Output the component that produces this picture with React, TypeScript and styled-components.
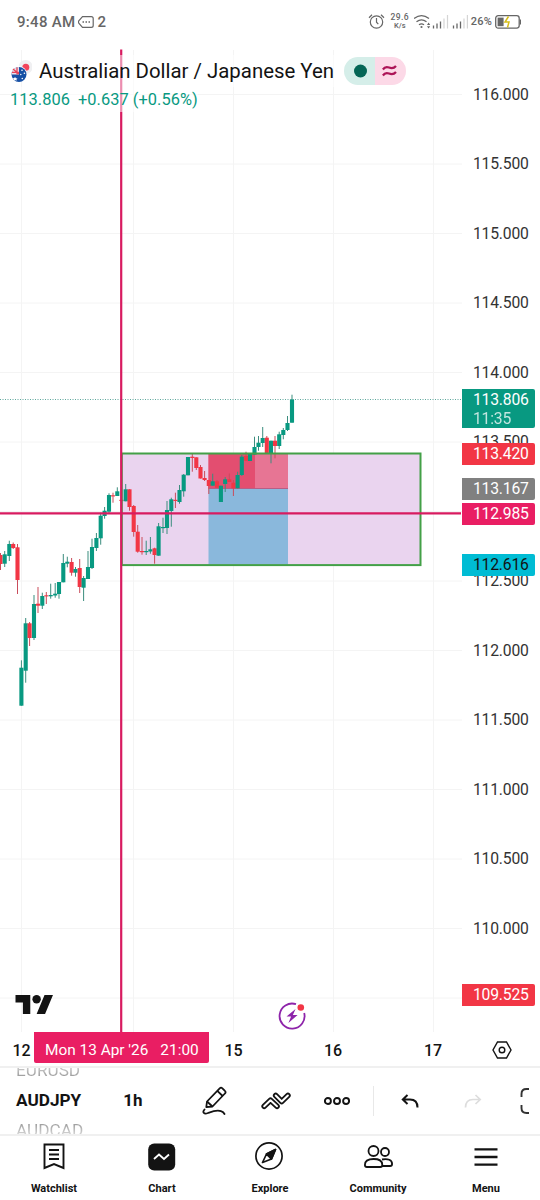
import React from 'react';
import styled, { createGlobalStyle } from 'styled-components';

const GlobalStyle = createGlobalStyle`
  * { box-sizing: border-box; }
  body { margin: 0; background: #fff; font-family: Roboto, "Liberation Sans", sans-serif; color: #131313; }
  svg { flex: none; }
`;

const GREEN = '#089981';
const RED = '#f23645';
const PINK = '#d81b60';

const Screen = styled.div`
  width: 540px; height: 1200px; display: flex; flex-direction: column; overflow: hidden; background: #fff;
`;
const StatusBar = styled.header`
  height: 48px; flex: none; display: flex; align-items: center; justify-content: space-between;
  padding: 0 18px 5px 17px; color: #666;
`;
const StatusGroup = styled.div`
  display: flex; align-items: center; gap: 3px;
`;
const Clock = styled.span`
  font-size: 15px; font-weight: 500; letter-spacing: 0.3px; white-space: nowrap;
`;
const AlarmIcon = styled.svg`margin-right: 2px;`;
const Speed = styled.span`
  display: flex; flex-direction: column; align-items: center; font-size: 8.5px; line-height: 8.5px; font-weight: 500;
  letter-spacing: 0.4px; width: 20px; margin-right: 1px;
  small { font-size: 7.5px; letter-spacing: 0; }
`;
const Battery = styled.span`font-size: 11px; font-weight: 500; letter-spacing: 0.2px;`;

const ChartArea = styled.main`
  position: relative; height: 984px; flex: none; display: flex;
`;
const Plot = styled.svg`display: block; flex: none;`;
const PriceAxis = styled.aside`
  position: relative; width: 78px; height: 984px; padding-top: 11.5px;
`;
const TickList = styled.div`display: flex; flex-direction: column;`;
const Tick = styled.div`
  height: 69.5px; flex: none; padding: 24px 0 0 11px; font-size: 15.7px; line-height: 22px; color: #333; letter-spacing: -0.2px;
`;
const PriceTag = styled.div<{ $top: number; $bg: string; $color?: string }>`
  position: absolute; left: 0; top: ${p => p.$top}px; width: 73px; min-height: 22px; padding: 0 0 0 11px;
  border-radius: 0 2px 2px 0; background: ${p => p.$bg}; color: ${p => p.$color ?? '#fff'};
  font-size: 15.7px; line-height: 22px; letter-spacing: -0.2px;
  small { display: block; font-size: 15.7px; line-height: 15px; height: 17px; opacity: .75; }
`;

const Legend = styled.section`
  position: absolute; left: 0; top: 7px; display: flex; flex-direction: column; padding-left: 10px;
`;
const LegendRow = styled.div`
  height: 32px; display: flex; align-items: center;
`;
const SymbolName = styled.h1`
  margin: 0 10px 0 7px; font-size: 20.4px; line-height: 32px; font-weight: 400; white-space: nowrap; background: rgba(255,255,255,.5);
`;
const Quote = styled.div`
  align-self: flex-start; display: flex; gap: 8px; height: 25px; line-height: 25px; font-size: 16.4px; color: ${GREEN};
  background: rgba(255,255,255,.5); white-space: nowrap; letter-spacing: 0.05px;
`;
const Pill = styled.div`
  display: flex; width: 62px; height: 28px; border-radius: 14px; overflow: hidden;
`;
const PillHalf = styled.span<{ $bg: string }>`
  flex: 1; display: flex; align-items: center; justify-content: center; background: ${p => p.$bg};
`;
const Brand = styled.svg`position: absolute; left: 15px; top: 947px;`;
const Flash = styled.svg`position: absolute; left: 277px; top: 953px;`;

const TimeAxis = styled.div`
  height: 36px; flex: none; display: flex; align-items: center; border-bottom: 2px solid #f0f0f0;
  font-size: 16px; font-weight: 500;
`;
const Day = styled.span<{ $w: number }>`width: ${p => p.$w}px; flex: none; text-align: center; padding-top: 2px;`;
const FirstDay = styled(Day)`text-align: left; padding-left: 12.5px;`;
const DateTag = styled.div`
  width: 175px; height: 31px; flex: none; align-self: flex-start; display: flex; align-items: center; gap: 12px;
  padding: 5px 0 0 11px; background: #e91e63; color: #fff; border-radius: 0 0 2px 2px;
  font-size: 15.4px; font-weight: 400; white-space: nowrap;
`;

const Toolbar = styled.div`
  height: 68px; flex: none; display: flex; align-items: center; border-bottom: 2px solid #f0f0f0; overflow: hidden;
`;
const SymbolWheel = styled.div`
  width: 101px; height: 66px; flex: none; padding: 0 0 2px 16px; display: flex; flex-direction: column; justify-content: center;
  overflow: hidden;
`;
const WheelItem = styled.span<{ $on?: boolean; $fade?: string }>`
  font-size: 17.2px; line-height: 30px; height: 30px; flex: none; align-self: flex-start;
  font-weight: ${p => (p.$on ? 700 : 400)};
  color: ${p => (p.$on ? '#131313' : 'transparent')};
  ${p => p.$fade && `background: linear-gradient(${p.$fade}, #888 15%, #e4e4e4 75%); -webkit-background-clip: text; background-clip: text;`}
`;
const ToolSlot = styled.div<{ $w: number; $ml?: number }>`
  width: ${p => p.$w}px; margin-left: ${p => p.$ml ?? 0}px; height: 66px; flex: none; display: flex; align-items: center;
  justify-content: center;
`;
const Interval = styled(ToolSlot)`padding-bottom: 2px; font-size: 17px; font-weight: 700;`;
const AxisSettings = styled.div`
  width: 87px; flex: none; display: flex; justify-content: center; padding-top: 2px;
`;
const Divider = styled.i`width: 1px; height: 30px; margin-left: 6px; background: #e8e8e8; flex: none;`;

const Nav = styled.nav`height: 64px; flex: none; display: flex;`;
const NavItem = styled.a`
  width: 108px; display: flex; flex-direction: column; align-items: center; padding-top: 6px;
  font-size: 11px; line-height: 16px; font-weight: 700; gap: 9.5px;
`;

type Candle = [number, number, number, number, number, 0 | 1];
// x, body top, body bottom, wick top, wick bottom, rising
const candles: Candle[] = [
  [0.5, 555, 564, 553, 570, 0], [4.7, 554.3, 563.7, 551, 567, 1], [9.3, 544, 556, 540.7, 561, 1],
  [13.2, 544, 548, 542.5, 549, 0], [17.5, 547.3, 580, 544, 594, 0], [21.4, 667.7, 705.7, 660.3, 705.7, 1],
  [25.7, 623.3, 670.7, 618, 682.7, 1], [29.6, 623.3, 638, 622, 646, 0], [34, 604, 638, 595, 640, 1],
  [38, 603.7, 605.7, 587, 613, 0], [42.3, 596, 605.7, 592.7, 609, 1], [46.3, 595.3, 596.4, 592, 604, 0],
  [50.7, 595, 596.3, 583.7, 598.7, 1], [55.2, 593.7, 595.5, 583, 597.7, 1], [59, 582, 594, 582, 598.7, 1],
  [63.3, 563, 582.3, 554, 582.3, 1], [67.3, 561.7, 563.7, 556.7, 567.3, 1], [71.6, 562, 572.7, 558, 575.7, 0],
  [75.5, 569, 572.7, 567, 576.7, 1], [79.7, 568, 587, 559, 593, 0], [83.6, 578, 587.7, 576, 601, 1],
  [88, 567, 579, 551, 579, 1], [92, 547, 568, 538.7, 569, 1], [96.4, 538, 548, 533, 551, 1],
  [100.7, 515.7, 538.3, 512.7, 544.7, 1], [104.6, 510.7, 516, 507, 518.7, 1], [109, 495, 511.7, 493.3, 513, 1],
  [113, 495.3, 496.4, 492.7, 502.7, 0], [117.3, 491.3, 496, 487.3, 496, 1], [121.4, 499.8, 501, 487, 501, 0],
  [125.7, 489.3, 501.3, 484, 501.3, 1], [129.5, 489.3, 507, 489.3, 510.7, 0], [133.7, 506, 532, 505, 536.7, 0],
  [137.7, 531.7, 551.7, 525, 552.7, 0], [142, 551, 552.2, 537, 554.7, 0], [146.2, 551, 552.2, 540.7, 555, 1],
  [150.4, 549.3, 551.5, 537, 553.7, 1], [154.6, 548.3, 555, 547.7, 563.7, 0], [158.6, 526.3, 555.7, 523, 555.7, 1],
  [163, 527, 528.2, 517.7, 533, 1], [167, 510, 528, 501, 534, 1], [171.3, 499.3, 511, 497.7, 526.7, 1],
  [175.4, 499.8, 501, 492.7, 508, 0], [179.5, 490, 502, 485, 503.7, 1], [183.7, 474.7, 491.3, 474, 496.7, 1],
  [188, 457, 475.3, 457, 475.3, 1], [192.3, 456.7, 458, 453.3, 471.7, 0], [196.3, 457.3, 468, 457.3, 470, 0],
  [200.5, 467, 478.5, 465, 478.5, 0], [204.6, 478, 480, 471, 481, 0], [208.8, 480, 486, 480, 494, 0],
  [212.7, 481.3, 485.7, 473.7, 485.7, 1], [217, 481.3, 487.7, 480, 487.7, 0], [220.9, 485.7, 502, 485.7, 502, 1],
  [225.2, 479.3, 484, 477, 492, 1], [229.3, 479.3, 482, 473.5, 482, 0], [233.4, 482.7, 488.3, 480, 496, 0],
  [237.6, 475, 488.3, 471.7, 488.3, 1], [241.8, 456.7, 475, 455, 476, 1], [246, 456, 460.7, 451.7, 461, 0],
  [250, 454, 461, 454, 461, 1], [254.5, 447, 454.7, 436.7, 454.7, 1], [258.5, 442.7, 447, 436, 450.7, 1],
  [262.7, 438, 443, 427, 447, 1], [266.8, 437.7, 453.7, 436, 453.7, 0], [271, 440.7, 453.7, 440.7, 463.3, 1],
  [275, 440.7, 446, 436, 458.3, 0], [279.2, 434.3, 446, 431.7, 449, 1], [283.3, 430, 435, 428, 439.3, 1],
  [287.5, 423, 430, 416, 431, 1], [292, 399.3, 422.7, 394.7, 422.7, 1],
];

const prices = ['116.000', '115.500', '115.000', '114.500', '114.000', '113.500', '113.000', '112.500', '112.000', '111.500', '111.000', '110.500', '110.000'];

const ChartPlot = () => (
  <Plot width="462" height="984" viewBox="0 48 462 984">
    {prices.concat('109.500').map((p, i) => <path key={p} d={`M0 ${94.5 + i * 69.5}H462`} stroke="#f4f4f4" />)}
    {[21.5, 133.5, 233.5, 333.5, 433.5].map(x => <path key={x} d={`M${x} 50V1032`} stroke="#f4f4f4" />)}
    <rect x="121.5" y="453.7" width="299" height="111.6" fill="#ead4ef" />
    <rect x="208.5" y="454" width="79.5" height="34.5" fill="#e77594" />
    <rect x="208.5" y="454" width="46.5" height="34.5" fill="#e34e70" />
    <rect x="208.5" y="488.5" width="79.5" height="76" fill="#8ab8dc" />
    <path d="M208.5 488.5h79.5" stroke="#b65f86" />
    {candles.map(([x, t, b, wt, wb, up]) => (
      <g key={x} fill={up ? GREEN : RED}>
        <rect x={x - 0.5} y={wt} width="1" height={wb - wt} fill={up ? '#3b8d7e' : '#c94c5b'} />
        <rect x={x - 2.05} y={t} width="4.1" height={b - t} />
      </g>
    ))}
    <rect x="121.8" y="453.5" width="298.7" height="111.6" fill="none" stroke="#43a047" strokeWidth="2" />
    <path d="M0 399.5H462" stroke="#5fa79c" strokeDasharray="1 1.5" />
    <path d="M0 513.4H461M121.2 49.5V1032" stroke={PINK} strokeWidth="2.2" />
  </Plot>
);

const Flags = () => (
  <svg width="22" height="24" viewBox="0 0 22 24">
    <circle cx="15.6" cy="8" r="7" fill="#f0f0f2" />
    <circle cx="15.8" cy="8.2" r="3.5" fill="#f2455c" />
    <circle cx="9" cy="15.5" r="8.3" fill="#fff" />
    <circle cx="9" cy="15.5" r="7.5" fill="#1650a5" />
    <path d="M9 8v7.5H1.5A7.5 7.5 0 0 1 9 8z" fill="#e9dfe8" />
    <path d="M7 8.5v7M2 13.3h7M3 10l6 5" stroke="#e5435a" strokeWidth="1.3" />
    <path d="M5 18l1 1.2 1.5.2-1 1 .1 1.4L5 21l-1.4.6.2-1.4-1-1 1.5-.2z" fill="#fff" />
    <g fill="#fff"><circle cx="12" cy="11.3" r=".8" /><circle cx="14.4" cy="14.3" r=".8" /><circle cx="10.8" cy="15.5" r=".7" /><circle cx="12.3" cy="19.5" r=".8" /></g>
  </svg>
);

const StatusIcons = () => (
  <>
    <AlarmIcon width="17" height="17" viewBox="0 0 17 17" fill="none" stroke="#666" strokeWidth="1.2">
      <circle cx="8.5" cy="9" r="6.2" /><path d="M8.5 5v4.2l1.8 2M1 4.7L4 1.8M16 4.7l-3-2.9" />
    </AlarmIcon>
    <Speed>29.6<small>K/s</small></Speed>
    <svg width="54" height="16" viewBox="0 0 54 16" fill="none" stroke="#666">
      <path d="M0 4.5Q7.5-1.2 15 4.5M2.5 7.8Q7.5 3.8 12.5 7.8M5 10.8Q7.5 8.8 10 10.8" strokeWidth="1.3" />
      <circle cx="7.5" cy="13" r="1.1" fill="#666" stroke="none" />
      <path d="M13 11l1.6-2.4 1.6 2.4zM13 12.2l1.6 2.4 1.6-2.4z" fill="#666" stroke="none" />
      <path d="M19.5 14.5v-3M23 14.5v-5M26.5 14.5v-7M39.5 14.5v-3M43 14.5v-5M46.5 14.5v-7" strokeWidth="1.3" />
      <path d="M30 14.5v-10M33.5 14.5V1M50 14.5v-10M53.4 14.5V1" stroke="#d5d5d5" strokeWidth="1.2" />
    </svg>
    <Battery>26%</Battery>
    <svg width="27" height="14" viewBox="0 0 27 14">
      <rect x=".7" y=".7" width="23.5" height="12.4" rx="2.5" fill="none" stroke="#666" strokeWidth="1.3" />
      <rect x="2.6" y="2.6" width="6" height="8.6" fill="#666" /><path d="M24.8 4.500h1.200v5h-1.200z" fill="#666" />
      <path d="M13.5 1.5L10 7h4l-1.5 5.5" fill="none" stroke="#d5bc19" strokeWidth="1.5" />
    </svg>
  </>
);

const App = () => (
  <Screen>
    <GlobalStyle />
    <StatusBar>
      <StatusGroup>
        <Clock>9:48 AM</Clock>
        <svg width="16" height="12" viewBox="0 0 16 12" fill="none" stroke="#666" strokeWidth="1.2">
          <path d="M4.5.7h8.8q1.9 0 1.9 1.9v6.8q0 1.9-1.9 1.9H4.5L.8 7.2Q.2 6 .8 4.8z" />
          <path d="M4.5 6h1.5M7.5 6H9M10.5 6H12" strokeWidth="1.5" />
        </svg>
        <Clock>2</Clock>
      </StatusGroup>
      <StatusGroup><StatusIcons /></StatusGroup>
    </StatusBar>

    <ChartArea>
      <ChartPlot />
      <PriceAxis>
        <TickList>{prices.map(p => <Tick key={p}>{p}</Tick>)}</TickList>
        <PriceTag $top={340.5} $bg={GREEN}>113.806<small>11:35</small></PriceTag>
        <PriceTag $top={394.5} $bg={RED}>113.420</PriceTag>
        <PriceTag $top={430} $bg="#808080">113.167</PriceTag>
        <PriceTag $top={454.5} $bg="#e91e63">112.985</PriceTag>
        <PriceTag $top={506} $bg="#00bcd4" $color="#131313">112.616</PriceTag>
        <PriceTag $top={936} $bg={RED}>109.525</PriceTag>
      </PriceAxis>
      <Legend>
        <LegendRow>
          <Flags />
          <SymbolName>Australian Dollar / Japanese Yen</SymbolName>
          <Pill>
            <PillHalf $bg="#d5eee9"><svg width="14" height="14"><circle cx="7.5" cy="7" r="6.5" fill="#056656" /></svg></PillHalf>
            <PillHalf $bg="#fcd9e7">
              <svg width="18" height="14" viewBox="0 0 18 14" fill="none" stroke="#ad1457" strokeWidth="2.2">
                <path d="M.9 5.5C2.500 3.200 4.500 2.600 7 3.600s5 .8 7-1.600M.9 11.500C2.500 9.200 4.500 8.600 7 9.600s5 .8 7-1.600" />
              </svg>
            </PillHalf>
          </Pill>
        </LegendRow>
        <Quote><span>113.806</span><span>+0.637 (+0.56%)</span></Quote>
      </Legend>
      <Brand width="39" height="19" viewBox="0 4 36 18" fill="#131313">
        <path d="M14 22H7V11H0V4h14v18zM28 22h-8l7.5-18h8L28 22z" /><circle cx="20" cy="8" r="4" />
      </Brand>
      <Flash width="30" height="30" viewBox="0 0 30 30">
        <path d="M19 3.2A12.5 12.5 0 1 0 27.2 12" fill="none" stroke="#8e24aa" strokeWidth="1.8" />
        <path d="M18.5 8L9.5 15.500h4.600l-2.700 6.500 9.200-8h-4.700z" fill="#8e24aa" />
        <circle cx="23.8" cy="6.500" r="3.3" fill={RED} />
      </Flash>
    </ChartArea>

    <TimeAxis>
      <FirstDay $w={34}>12</FirstDay>
      <DateTag><span>Mon 13 Apr '26</span><span>21:00</span></DateTag>
      <Day $w={49}>15</Day>
      <Day $w={150}>16</Day>
      <Day $w={50}>17</Day>
      <AxisSettings>
        <svg width="20" height="18" viewBox="0 0 20 18" fill="none" stroke="#131313" strokeWidth="1.4">
          <path d="M5.5 1h9L19 9l-4.5 8h-9L1 9z" /><circle cx="10" cy="9" r="2.8" />
        </svg>
      </AxisSettings>
    </TimeAxis>

    <Toolbar>
      <SymbolWheel>
        <WheelItem $fade="to top">EURUSD</WheelItem>
        <WheelItem $on>AUDJPY</WheelItem>
        <WheelItem $fade="to bottom">AUDCAD</WheelItem>
      </SymbolWheel>
      <Interval $w={64}>1h</Interval>
      <ToolSlot $w={60} $ml={20}>
        <svg width="26" height="30" viewBox="0 0 26 30" fill="none" stroke="#131313" strokeWidth="1.8" strokeLinejoin="round">
          <path d="M5 15.5L17.7 2.3q1.300-1.300 2.700 0l2.500 2.500q1.400 1.300 0 2.700L10.5 20.500 4.300 21.200z" />
          <path d="M5 15.500l5.500 5M15.300 4.800l5.400 5.200" />
          <path d="M2.500 23.500C0 26.500 2 28.500 6 27s9-3.500 13-1.800q2.500.8 3.500 2.800" strokeLinecap="round" />
        </svg>
      </ToolSlot>
      <ToolSlot $w={60} $ml={1}>
        <svg width="30" height="20" viewBox="0 0 30 20" fill="none" strokeLinecap="round" strokeLinejoin="round">
          <g stroke="#131313" strokeWidth="5.6"><path d="M3.2 15.300L9.500 9.200 16 15.300M14.700 4.500l6 6 6.200-6" /></g>
          <g stroke="#fff" strokeWidth="2"><path d="M3.2 15.300L9.500 9.200 16 15.300M14.700 4.500l6 6 6.200-6" /></g>
        </svg>
      </ToolSlot>
      <ToolSlot $w={60} $ml={1}>
        <svg width="26" height="10" viewBox="0 0 26 10" fill="none" stroke="#131313" strokeWidth="1.9">
          <circle cx="3.9" cy="5" r="3" /><circle cx="13" cy="5" r="3" /><circle cx="22.1" cy="5" r="3" />
        </svg>
      </ToolSlot>
      <Divider />
      <ToolSlot $w={72}>
        <svg width="18" height="15" viewBox="0 0 18 15" fill="none" stroke="#131313" strokeWidth="2">
          <path d="M6.5 1L1.8 5.5l4.700 4.500M1.800 5.500H9q7.500 0 7.500 8" />
        </svg>
      </ToolSlot>
      <ToolSlot $w={53}>
        <svg width="18" height="15" viewBox="0 0 18 15" fill="none" stroke="#ddd" strokeWidth="1.7">
          <path d="M11.5 1l4.700 4.500-4.700 4.500M16.200 5.500H9q-7.500 0-7.500 8" />
        </svg>
      </ToolSlot>
      <ToolSlot $w={26} $ml={21}>
        <svg width="26" height="26" viewBox="0 0 26 26" fill="none" stroke="#333" strokeWidth="1.9">
          <path d="M9 1H6.500Q1.500 1 1.500 6v3M9 25H6.500q-5 0-5-5v-3" />
        </svg>
      </ToolSlot>
    </Toolbar>

    <Nav>
      <NavItem>
        <svg width="22" height="29" viewBox="0 0 22 29" fill="none" stroke="#131313" strokeWidth="1.9">
          <path d="M1.500 2.500h19V26L11 22l-9.500 4zM6 8h10M6 12.500h10M6 17h10" />
        </svg>
        Watchlist
      </NavItem>
      <NavItem>
        <svg width="28" height="29" viewBox="0 0 28 29">
          <rect x=".2" y="1.500" width="27" height="27" rx="6" fill="#131313" />
          <path d="M6 17l5-4.500 5 4.500 5-4.500" fill="none" stroke="#fff" strokeWidth="1.8" />
        </svg>
        Chart
      </NavItem>
      <NavItem>
        <svg width="30" height="29" viewBox="0 0 30 29" fill="none" stroke="#131313" strokeWidth="1.7" strokeLinejoin="round">
          <circle cx="14" cy="14" r="13.1" />
          <path d="M20.500 7.500L11.500 12l5 5zM11.500 12L7.500 20.500l9-3.500" />
          <path d="M20.500 7.500L11.500 12l5 5z" fill="#131313" />
        </svg>
        Explore
      </NavItem>
      <NavItem>
        <svg width="29" height="29" viewBox="0 0 29 29" fill="none" stroke="#131313" strokeWidth="1.8">
          <circle cx="9.500" cy="9" r="5" /><circle cx="21" cy="10" r="4" />
          <path d="M.9 23c0-4.500 3-6 8.700-6s8.700 1.500 8.700 6q0 2-2 2H2.900q-2 0-2-2zM18 17.500c6-1.200 10.100.5 10.100 4.500q0 2-2 2h-8" />
        </svg>
        Community
      </NavItem>
      <NavItem>
        <svg width="24" height="29" viewBox="0 0 24 29" stroke="#131313" strokeWidth="2.3"><path d="M.5 7.300h23M.5 15h23M.5 22.700h23" /></svg>
        Menu
      </NavItem>
    </Nav>
  </Screen>
);

export default App;
